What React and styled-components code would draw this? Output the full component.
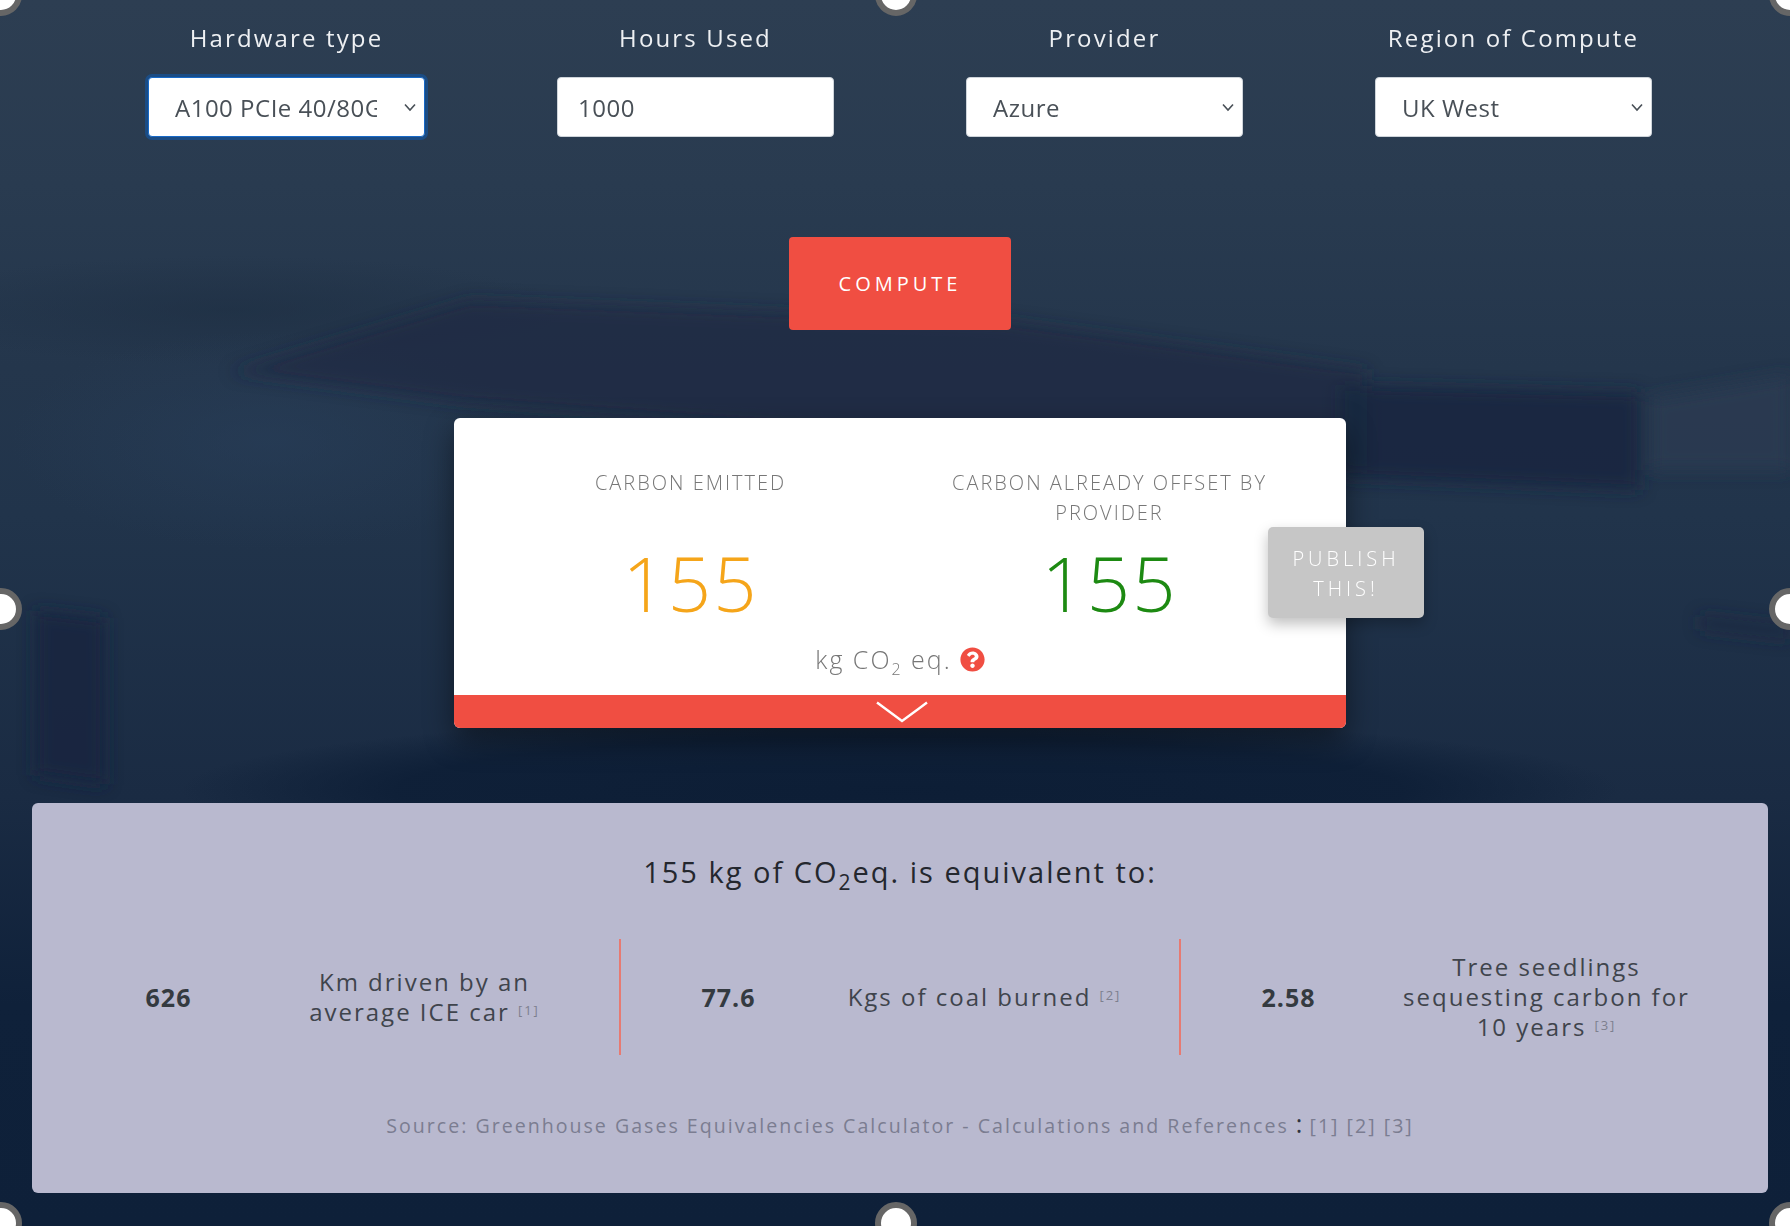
import React from "react";
import styled, { createGlobalStyle } from "styled-components";
import { FaQuestionCircle } from "react-icons/fa";

const chevron =
  "data:image/svg+xml,%3Csvg xmlns='http://www.w3.org/2000/svg' width='14' height='9' viewBox='0 0 14 9'%3E%3Cpath d='M2 1.5 L7 7 L12 1.5' fill='none' stroke='%23495057' stroke-width='1.6'/%3E%3C/svg%3E";

const GlobalStyle = createGlobalStyle`
  html, body {
    margin: 0;
    padding: 0;
    background: #0f2139;
    overflow: hidden;
  }
  * { box-sizing: border-box; }
  body {
    font-family: "Open Sans", "Liberation Sans", sans-serif;
  }
`;

const Page = styled.div`
  position: relative;
  width: 1790px;
  height: 1226px;
  overflow: hidden;
  isolation: isolate;
`;

const Backdrop = styled.svg`
  position: absolute;
  inset: 0;
  width: 100%;
  height: 100%;
  z-index: -1;
`;

const Handle = styled.span`
  position: absolute;
  left: ${(p) => p.$x}px;
  top: ${(p) => p.$y}px;
  width: 42px;
  height: 42px;
  margin: -21px 0 0 -21px;
  border-radius: 50%;
  background: #fff;
  border: 6px solid #666;
`;

const Content = styled.main`
  width: 1800px;
  padding: 0 32px;
  display: flex;
  flex-direction: column;
  align-items: center;
`;

const FieldRow = styled.section`
  display: grid;
  grid-template-columns: repeat(4, 277px);
  column-gap: 132px;
  padding-top: 21px;
`;

const Field = styled.label`
  display: flex;
  flex-direction: column;
  align-items: center;
  gap: 22px;
`;

const FieldLabel = styled.span`
  color: #eef0f3;
  font-size: 24px;
  line-height: 34px;
  letter-spacing: 2.15px;
  font-weight: 400;
`;

const controlStyle = `
  width: 100%;
  height: 60px;
  border: 1px solid #ced4da;
  border-radius: 4px;
  background-color: #fff;
  color: #495057;
  font-family: "Open Sans", "Liberation Sans", sans-serif;
  font-size: 24px;
  letter-spacing: 0.5px;
  outline: none;
`;

const Select = styled.select`
  ${controlStyle}
  appearance: none;
  padding: 0 47px 0 26px;
  background-image: url("${chevron}");
  background-repeat: no-repeat;
  background-position: right 7px center;
  ${(p) =>
    p.$focused &&
    `
    border-color: #1769c7;
    box-shadow: 0 0 0 3px #1b4c84;
  `}
`;

const TextInput = styled.input`
  ${controlStyle}
  padding: 0 20px;
`;

const ComputeButton = styled.button`
  margin-top: 100px;
  width: 222px;
  height: 93px;
  border: none;
  border-radius: 4px;
  background: #f04e42;
  color: #fff;
  font-family: inherit;
  font-size: 20px;
  letter-spacing: 4px;
  font-weight: 400;
`;

const ResultCard = styled.section`
  position: relative;
  margin-top: 88px;
  width: 892px;
  height: 310px;
  background: #fff;
  border-radius: 6px;
  box-shadow: 0 12px 30px rgba(0, 0, 0, 0.45);
  display: flex;
  flex-direction: column;
`;

const ResultBody = styled.div`
  flex: 1;
  padding: 50px 27px 0;
  display: flex;
  flex-direction: column;
  align-items: center;
`;

const ResultColumns = styled.div`
  align-self: stretch;
  display: grid;
  grid-template-columns: 1fr 1fr;
`;

const ResultColumn = styled.div`
  display: flex;
  flex-direction: column;
  align-items: center;
  text-align: center;
`;

const ResultTitle = styled.div`
  height: 60px;
  max-width: 360px;
  color: #777;
  font-size: 20px;
  line-height: 30px;
  letter-spacing: 2px;
  font-weight: 300;
  text-transform: uppercase;
`;

const ResultValue = styled.div`
  margin-top: 13px;
  color: ${(p) => p.$color};
  font-size: 76px;
  line-height: 84px;
  letter-spacing: 2px;
  font-weight: 300;
`;

const UnitLine = styled.div`
  margin-top: 18px;
  display: flex;
  align-items: center;
  gap: 8px;
  color: #777;
  font-size: 25px;
  line-height: 32px;
  letter-spacing: 2px;
  font-weight: 300;

  sub {
    font-size: 16px;
    line-height: 0;
  }

  svg {
    color: #f04e42;
  }
`;

const CardFooter = styled.div`
  height: 33px;
  background: #f04e42;
  border-radius: 0 0 6px 6px;
  display: flex;
  justify-content: center;
  align-items: center;
  padding-left: 4px;
`;

const PublishButton = styled.button`
  position: absolute;
  left: 814px;
  top: 109px;
  width: 156px;
  height: 91px;
  padding: 2px 0 0;
  border: none;
  border-radius: 5px;
  background: #c6c6c6;
  color: #fff;
  font-family: inherit;
  font-size: 20px;
  line-height: 30px;
  letter-spacing: 4px;
  font-weight: 300;
  box-shadow: 0 6px 14px rgba(0, 0, 0, 0.25);
`;

const EquivalentPanel = styled.section`
  margin-top: 75px;
  width: 1736px;
  height: 390px;
  border-radius: 6px;
  background: #b9b9cf;
  padding: 49px 29.5px 0 26.5px;
  display: flex;
  flex-direction: column;
  align-items: center;
`;

const PanelTitle = styled.h2`
  margin: 0 0 0 3px;
  color: #24272e;
  font-size: 29px;
  line-height: 40px;
  letter-spacing: 2px;
  font-weight: 400;

  sub {
    font-size: 21px;
    line-height: 0;
  }
`;

const EquivalentRow = styled.div`
  margin-top: 47px;
  align-self: stretch;
  display: grid;
  grid-template-columns: repeat(3, 1fr);
`;

const EquivalentItem = styled.div`
  height: 116px;
  display: grid;
  grid-template-columns: 216px ${(p) => (p.$wide ? "300px" : "296px")};
  align-items: center;
  text-align: center;
  border-left: ${(p) => (p.$divider ? "2px solid #e77a72" : "2px solid transparent")};
`;

const EquivalentNumber = styled.div`
  color: #343a40;
  font-size: 25px;
  font-weight: 700;
  letter-spacing: 1px;
`;

const EquivalentText = styled.div`
  color: #3f444c;
  font-size: 24px;
  line-height: 30px;
  letter-spacing: 2px;
  font-weight: 400;

  sup {
    font-size: 13px;
    line-height: 0;
    color: #7d7f8e;
    vertical-align: 6px;
    margin-left: 8px;
  }
`;

const SourceLine = styled.p`
  margin: 56px 0 0 3px;
  color: #7b7d91;
  font-size: 19.6px;
  line-height: 30px;
  letter-spacing: 2px;

  b {
    color: #2f3340;
    font-size: 25px;
    font-weight: 400;
    letter-spacing: 0;
    line-height: 0;
  }
`;

const handles = [
  [1, -5],
  [896, -5],
  [1790, -5],
  [1, 609],
  [1790, 609],
  [1, 1223],
  [896, 1223],
  [1790, 1223],
];

const App = () => {
  return (
    <Page>
      <GlobalStyle />
      <Backdrop viewBox="0 0 1790 1226" preserveAspectRatio="none" aria-hidden="true">
        <defs>
          <linearGradient id="sky" x1="0" y1="0" x2="0" y2="1">
            <stop offset="0" stopColor="#2d3e52" />
            <stop offset="0.15" stopColor="#293b50" />
            <stop offset="0.3" stopColor="#24364c" />
            <stop offset="0.42" stopColor="#21344b" />
            <stop offset="0.65" stopColor="#1a2b43" />
            <stop offset="0.82" stopColor="#0f213a" />
            <stop offset="1" stopColor="#0e2039" />
          </linearGradient>
          <radialGradient id="shade">
            <stop offset="0" stopColor="#1d2e42" stopOpacity="0.6" />
            <stop offset="1" stopColor="#1d2e42" stopOpacity="0" />
          </radialGradient>
          <radialGradient id="floor">
            <stop offset="0" stopColor="#0c1d35" stopOpacity="0.95" />
            <stop offset="0.7" stopColor="#0c1d35" stopOpacity="0.8" />
            <stop offset="1" stopColor="#0c1d35" stopOpacity="0" />
          </radialGradient>
          <radialGradient id="glow">
            <stop offset="0" stopColor="#29405c" stopOpacity="0.5" />
            <stop offset="1" stopColor="#29405c" stopOpacity="0" />
          </radialGradient>
          <filter id="soft" x="-10%" y="-10%" width="120%" height="120%">
            <feGaussianBlur stdDeviation="8" />
          </filter>
        </defs>
        <rect width="1790" height="1226" fill="url(#sky)" />
        <ellipse cx="230" cy="310" rx="340" ry="55" fill="url(#shade)" />
        <ellipse cx="270" cy="440" rx="260" ry="110" fill="url(#glow)" />
        <ellipse cx="900" cy="790" rx="720" ry="75" fill="url(#floor)" />
        <g filter="url(#soft)">
          <path d="M230 372 L470 300 L1000 320 L1367 370 L1367 470 L460 402 Z" fill="#1a2a41" opacity="0.6" />
          <path d="M1340 385 L1640 392 L1640 490 L1340 478 Z" fill="#17273f" opacity="0.85" />
          <path d="M1650 398 L1790 375 L1790 470 L1650 470 Z" fill="#2a3b52" opacity="0.8" />
          <path d="M1700 615 L1790 625 L1790 640 L1700 630 Z" fill="#1a2a40" opacity="0.6" />
          <path d="M35 610 L105 618 L105 785 L35 775 Z" fill="#15263f" opacity="0.85" />
        </g>
      </Backdrop>

      <Content>
        <FieldRow>
          <Field>
            <FieldLabel>Hardware type</FieldLabel>
            <Select $focused defaultValue="a100">
              <option value="a100">A100 PCIe 40/80GB</option>
            </Select>
          </Field>
          <Field>
            <FieldLabel>Hours Used</FieldLabel>
            <TextInput type="text" defaultValue="1000" />
          </Field>
          <Field>
            <FieldLabel>Provider</FieldLabel>
            <Select defaultValue="azure">
              <option value="azure">Azure</option>
            </Select>
          </Field>
          <Field>
            <FieldLabel>Region of Compute</FieldLabel>
            <Select defaultValue="ukwest">
              <option value="ukwest">UK West</option>
            </Select>
          </Field>
        </FieldRow>

        <ComputeButton>COMPUTE</ComputeButton>

        <ResultCard>
          <ResultBody>
            <ResultColumns>
              <ResultColumn>
                <ResultTitle>Carbon emitted</ResultTitle>
                <ResultValue $color="#f5a51a">155</ResultValue>
              </ResultColumn>
              <ResultColumn>
                <ResultTitle>Carbon already offset by provider</ResultTitle>
                <ResultValue $color="#1d8a12">155</ResultValue>
              </ResultColumn>
            </ResultColumns>
            <UnitLine>
              <span>
                kg CO<sub>2</sub> eq.
              </span>
              <FaQuestionCircle size={25} />
            </UnitLine>
          </ResultBody>
          <CardFooter>
            <svg width="52" height="22" viewBox="0 0 52 22" fill="none">
              <path d="M1 1.5 L26 20 L51 1.5" stroke="#fff" strokeWidth="2.4" />
            </svg>
          </CardFooter>
          <PublishButton>
            PUBLISH
            <br />
            THIS!
          </PublishButton>
        </ResultCard>

        <EquivalentPanel>
          <PanelTitle>
            155 kg of CO<sub>2</sub>eq. is equivalent to:
          </PanelTitle>
          <EquivalentRow>
            <EquivalentItem>
              <EquivalentNumber>626</EquivalentNumber>
              <EquivalentText>
                Km driven by an average ICE car<sup>[1]</sup>
              </EquivalentText>
            </EquivalentItem>
            <EquivalentItem $divider>
              <EquivalentNumber>77.6</EquivalentNumber>
              <EquivalentText>
                Kgs of coal burned<sup>[2]</sup>
              </EquivalentText>
            </EquivalentItem>
            <EquivalentItem $divider $wide>
              <EquivalentNumber>2.58</EquivalentNumber>
              <EquivalentText>
                Tree seedlings sequesting carbon for 10 years<sup>[3]</sup>
              </EquivalentText>
            </EquivalentItem>
          </EquivalentRow>
          <SourceLine>
            Source: Greenhouse Gases Equivalencies Calculator - Calculations and References <b>:</b> [1] [2] [3]
          </SourceLine>
        </EquivalentPanel>
      </Content>

      {handles.map(([x, y]) => (
        <Handle key={`${x}-${y}`} $x={x} $y={y} />
      ))}
    </Page>
  );
};

export default App;
